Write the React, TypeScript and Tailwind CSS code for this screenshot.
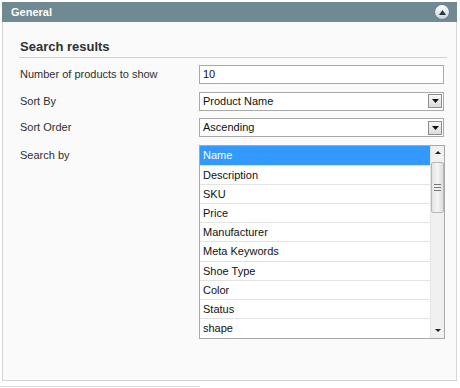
import React from 'react';

const searchFields = [
  'Name',
  'Description',
  'SKU',
  'Price',
  'Manufacturer',
  'Meta Keywords',
  'Shoe Type',
  'Color',
  'Status',
  'shape',
];

function SelectArrow() {
  return (
    <span className="flex h-[14px] w-[14px] items-center justify-center border border-[#8d8d8d] bg-gradient-to-b from-[#f7f7f7] to-[#dcdcdc]">
      <svg width="7" height="4" viewBox="0 0 7 4">
        <path d="M0 0h7L3.5 4z" fill="#111" />
      </svg>
    </span>
  );
}

function FakeSelect({ value }: { value: string }) {
  return (
    <div className="flex h-[19px] w-[245px] items-center justify-between border border-[#a9a9a9] bg-white pl-[3px] pr-[1px]">
      <span>{value}</span>
      <SelectArrow />
    </div>
  );
}

export default function App() {
  // multi-select list shows the first ten fields, first one highlighted
  const selected = 'Name';

  return (
    <div className="h-[388px] w-[460px] overflow-hidden bg-white pt-[2px] pl-[2px] font-['Liberation_Sans',Arial,sans-serif] text-[11px] text-[#2f2f2f]">
      <div className="w-[455px]">
        <div className="flex h-[20px] items-center justify-between bg-[#6f8a93] pl-[9px] pr-[8px]">
          <span className="text-[11px] font-bold text-white">General</span>
          <span className="flex h-[14px] w-[14px] items-center justify-center rounded-full bg-gradient-to-b from-white to-[#c9d3d6] shadow-[0_0_1px_#34474d]">
            <svg width="7" height="5" viewBox="0 0 7 5">
              <path d="M3.5 0L7 5H0z" fill="#1e3a44" />
            </svg>
          </span>
        </div>

        <div className="h-[359px] border-x border-b border-[#d6d6d6] bg-[#fafafa] pl-[16px] pr-[9px] pt-[17px]">
          <h3 className="border-b border-[#cfcfcf] pb-[2px] pl-[1px] text-[13px] font-bold leading-[16px] text-[#303030]">
            Search results
          </h3>

          <div className="mt-[7px] flex flex-col gap-[7.5px] pl-[1px]">
            <div className="flex items-center">
              <label className="w-[179px] shrink-0">Number of products to show</label>
              <div className="flex h-[19px] w-[245px] items-center border border-[#a9a9a9] bg-white pl-[3px] text-[#111]">
                10
              </div>
            </div>

            <div className="flex items-center">
              <label className="w-[179px] shrink-0">Sort By</label>
              <div className="text-[#111]">
                <FakeSelect value="Product Name" />
              </div>
            </div>

            <div className="flex items-center">
              <label className="w-[179px] shrink-0">Sort Order</label>
              <div className="text-[#111]">
                <FakeSelect value="Ascending" />
              </div>
            </div>

            <div className="flex items-start">
              <label className="w-[179px] shrink-0 pt-[2px]">Search by</label>
              <div className="flex h-[194px] w-[246px] border border-[#a9a9a9] bg-white text-[#111]">
                <ul className="flex-1">
                  {searchFields.map((field) => (
                    <li
                      key={field}
                      className={
                        field === selected
                          ? 'h-[19.2px] bg-[#3399ff] pl-[3px] leading-[19px] text-white'
                          : 'h-[19.2px] border-t border-[#e3e3e3] pl-[3px] leading-[18px]'
                      }
                    >
                      {field}
                    </li>
                  ))}
                </ul>

                <div className="flex w-[14px] flex-col items-center border-l border-[#e6e6e6] bg-[#f0f0f0]">
                  <span className="flex h-[14px] items-center">
                    <svg width="6" height="3" viewBox="0 0 6 3">
                      <path d="M3 0L6 3H0z" fill="#222" />
                    </svg>
                  </span>
                  <div className="mt-[2px] flex h-[51px] w-[13px] flex-col items-center justify-center gap-[2px] rounded-[2px] border border-[#b8b8b8] bg-gradient-to-r from-[#e4e4e4] via-[#f4f4f4] to-[#dcdcdc]">
                    <span className="h-px w-[7px] bg-[#777]" />
                    <span className="h-px w-[7px] bg-[#777]" />
                    <span className="h-px w-[7px] bg-[#777]" />
                  </div>
                  <span className="mt-auto flex h-[14px] items-center">
                    <svg width="6" height="3" viewBox="0 0 6 3">
                      <path d="M0 0h6L3 3z" fill="#222" />
                    </svg>
                  </span>
                </div>
              </div>
            </div>
          </div>
        </div>

        {/* top edge of the next panel, cut off by the window */}
        <div className="mt-[5px] ml-[-2px] flex h-[3px] w-[200px] border-t border-[#dcdcdc]" />
      </div>
    </div>
  );
}
